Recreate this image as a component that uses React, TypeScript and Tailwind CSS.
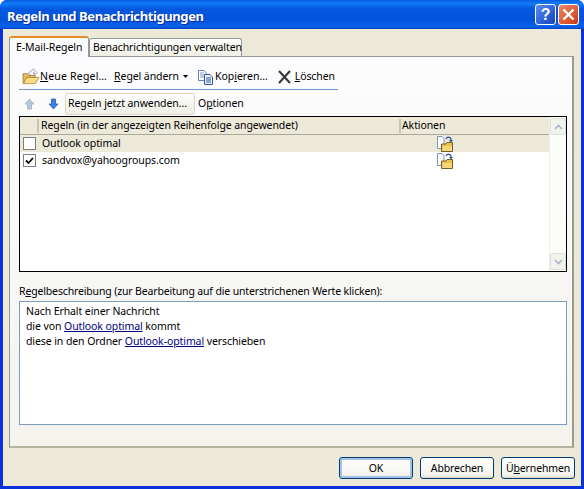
import React from "react";

const OpenFolder = () => (
  <svg width="18" height="17" viewBox="0 0 19 18">
    <path d="M7 5 L12 1 L16 5 L11 10 Z" fill="#f4f6fb" stroke="#7f8fb0" strokeWidth="0.8" />
    <path d="M12 4 L14 6 L12 7 Z" fill="#d0605a" />
    <path d="M1 6 H6 L7 8 H14 V10 H5 L2 16 H1 Z" fill="#e8bd5c" stroke="#9a7a2c" strokeWidth="0.8" />
    <path d="M5 10 H18 L14 16.5 H1.5 Z" fill="#fbdc85" stroke="#a8842e" strokeWidth="0.8" />
  </svg>
);

const CopyIcon = () => (
  <svg width="17" height="16" viewBox="0 0 17 16">
    <path d="M1.5 1.5 H7 L9 3.5 V11.5 H1.5 Z" fill="#fff" stroke="#5f7fb8" />
    <path d="M3 4 H7 M3 6 H7 M3 8 H7" stroke="#7e9ccc" />
    <path d="M7.5 5.5 H13 L15.5 8 V15.5 H7.5 Z" fill="#eef3fb" stroke="#2f55a0" />
    <path d="M9 9 H14 M9 11 H14 M9 13 H14" stroke="#2f55a0" />
  </svg>
);

const DeleteIcon = () => (
  <svg width="15" height="14" viewBox="0 0 15 14">
    <path d="M2 1 L13 13 M13 1 L2 13" stroke="#33353a" strokeWidth="2" />
  </svg>
);

const ArrowUp = () => (
  <svg width="11" height="12" viewBox="0 0 11 12">
    <path d="M5.5 1 L10 6 H7.5 V11 H3.5 V6 H1 Z" fill="#b4c6d8" stroke="#9db2c6" strokeWidth="0.8" />
  </svg>
);

const ArrowDown = () => (
  <svg width="11" height="12" viewBox="0 0 11 12">
    <path d="M5.5 11 L10 6 H7.5 V1 H3.5 V6 H1 Z" fill="#3f7de0" stroke="#2a5bb8" strokeWidth="0.8" />
  </svg>
);

const MoveIcon = () => (
  <svg width="16" height="16" viewBox="0 0 16 16">
    <path d="M0.5 0.5 H5 L7 2.5 V12.5 H0.5 Z" fill="#fff" stroke="#7f93bd" />
    <path d="M9 3 C10 0.5 13 0.5 14 3 V5" fill="none" stroke="#2c4f9c" strokeWidth="1.2" />
    <path d="M12 4 H16 L14 6.5 Z" fill="#2c4f9c" />
    <path d="M4.5 8 H9 L10 6.5 H15.5 V15.5 H4.5 Z" fill="#eac04f" stroke="#77602a" />
    <path d="M5.5 10 H15 V15 H5.5 Z" fill="#f6d778" />
  </svg>
);

const Chevron = ({ down }: { down?: boolean }) => (
  <svg width="9" height="6" viewBox="0 0 9 6">
    <path d={down ? "M1 1 L4.5 4.5 L8 1" : "M1 5 L4.5 1.5 L8 5"} fill="none" stroke="#a9b4c4" strokeWidth="1.6" />
  </svg>
);

const Btn = ({ children, primary }: { children: React.ReactNode; primary?: boolean }) => (
  <button
    className={
      "w-[74px] h-[22px] rounded-[3px] border border-[#003c74] bg-[linear-gradient(#ffffff,#f4f3ee_85%,#dcd8c8)] text-black leading-none whitespace-nowrap tracking-[-0.15px] " +
      (primary ? "shadow-[inset_0_0_0_2px_#a9c1ea]" : "")
    }
  >
    {children}
  </button>
);

export default function App() {
  return (
    <div className="w-[584px] h-[489px] flex flex-col rounded-t-[7px] overflow-hidden bg-[#0831d9] text-[10.5px] tracking-[-0.09px] whitespace-nowrap text-black font-['Noto_Sans','DejaVu_Sans',sans-serif]">
      <div className="h-[29px] shrink-0 flex items-center pl-[7px] pr-[5px] bg-[linear-gradient(#0a5ae0,#0f7cf6_12%,#0458e0_30%,#0353dc_70%,#0a63ee_90%,#0447c8)]">
        <span className="flex-1 pt-[4px] text-white font-bold text-[13px] tracking-[-0.4px] [text-shadow:1px_1px_0_#0a2a9a]">
          Regeln und Benachrichtigungen
        </span>
        <div className="flex gap-[2px]">
          <div className="w-[21px] h-[21px] rounded-[3px] border border-white bg-[linear-gradient(135deg,#5d8cf0,#2a5fd6_60%,#1d46b8)] flex items-center justify-center text-white font-bold text-[16px] font-['Liberation_Sans',sans-serif]">
            ?
          </div>
          <div className="w-[21px] h-[21px] rounded-[3px] border border-white bg-[linear-gradient(135deg,#e88a6a,#dc5a34_60%,#c03a18)] flex items-center justify-center">
            <svg width="13" height="13" viewBox="0 0 13 13">
              <path d="M1.5 1.5 L11.5 11.5 M11.5 1.5 L1.5 11.5" stroke="#fff" strokeWidth="2.4" />
            </svg>
          </div>
        </div>
      </div>

      <div className="flex-1 mx-[3px] mb-[3px] bg-[#ece9d8] flex flex-col pl-[6px] pr-[7px] pt-[7px] min-h-0">
        <div className="flex items-end h-[20px] shrink-0 relative z-10">
          <div className="w-[80px] h-[21px] -mb-px bg-[#fcfcfe] border-x border-[#919b9c] rounded-t-[3px] border-t-[2px] border-t-[#e68b2c] flex items-center pl-[6px]">
            E-Mail-Regeln
          </div>
          <div className="w-[153px] h-[18px] bg-[linear-gradient(#ffffff,#f0efe6)] border border-[#919b9c] border-b-0 rounded-t-[3px] flex items-center pl-[3px]">
            Benachrichtigungen verwalten
          </div>
        </div>

        <div className="h-[392px] shrink-0 border border-[#919b9c] border-r-[2px] border-b-[2px] border-r-[#9c9a8e] border-b-[#b5b2a0] bg-[linear-gradient(#fcfcfe,#f4f3ee)] pl-[9px] pr-[5px] flex flex-col">
          <div className="w-[319px] h-[33px] shrink-0 border-b border-[#6f93cf] flex items-center pt-[7px] pl-[3px]">
            <OpenFolder />
            <span className="tracking-[0.2px]"><u>N</u>eue Regel…</span>
            <span className="ml-[7px]"><u>R</u>egel ändern</span>
            <svg className="ml-[4px]" width="5" height="3" viewBox="0 0 5 3"><path d="M0 0 H5 L2.5 3 Z" fill="#000" /></svg>
            <span className="ml-[9px] flex"><CopyIcon /></span>
            <span className="ml-px tracking-[0px]">Kop<u>i</u>eren…</span>
            <span className="ml-[9px] flex"><DeleteIcon /></span>
            <span className="ml-[3px]"><u>L</u>öschen</span>
          </div>

          <div className="h-[26px] shrink-0 flex items-center pt-[2px]">
            <span className="ml-[5px] flex"><ArrowUp /></span>
            <span className="ml-[13px] flex"><ArrowDown /></span>
            <div className="ml-[6px] w-[130px] h-[22px] rounded-[3px] border border-[#d8d5c6] bg-[linear-gradient(#fdfdfb,#efeee6)] flex items-center pl-[2px] whitespace-pre">
              Regeln <u>j</u>etzt anwenden…
            </div>
            <span className="ml-[3px]">O<u>p</u>tionen</span>
          </div>

          <div className="h-[156px] shrink-0 border border-black bg-white flex">
            <div className="flex-1 flex flex-col">
              <div className="h-[18px] flex bg-[#ece9d8] border-b border-[#aca899] items-center">
                <div className="w-[19px] h-[14px] border-r-2 border-[#c7c5b2]" />
                <div className="w-[362px] h-[14px] flex items-center pl-[2px] border-r-2 border-[#c7c5b2]">
                  Regeln (in der angezeigten Reihenfolge angewendet)
                </div>
                <div className="pl-[1px]">Aktionen</div>
              </div>
              <div className="h-[17px] flex items-center bg-[#ece9d8]">
                <div className="ml-[3px] w-[13px] h-[13px] border border-[#7f7f7f] bg-white" />
                <span className="ml-[6px] flex-1">Outlook optimal</span>
                <span className="mr-[96px] flex"><MoveIcon /></span>
              </div>
              <div className="h-[17px] flex items-center">
                <div className="ml-[3px] w-[13px] h-[13px] border border-[#7f7f7f] bg-white flex items-center justify-center">
                  <svg width="9" height="8" viewBox="0 0 9 8">
                    <path d="M1 3.5 L3.5 6 L8 1" fill="none" stroke="#000" strokeWidth="1.8" />
                  </svg>
                </div>
                <span className="ml-[6px] flex-1">sandvox@yahoogroups.com</span>
                <span className="mr-[96px] flex"><MoveIcon /></span>
              </div>
            </div>
            <div className="w-[17px] flex flex-col justify-between bg-[#fcfcf8] border-l border-[#eeeeea]">
              <div className="h-[17px] mt-px rounded-[2px] border border-[#dfe0dc] bg-[#f3f3ee] flex items-center justify-center"><Chevron /></div>
              <div className="h-[17px] mb-px rounded-[2px] border border-[#dfe0dc] bg-[#f3f3ee] flex items-center justify-center"><Chevron down /></div>
            </div>
          </div>

          <div className="mt-[11px] h-[17px] shrink-0 flex items-center whitespace-pre tracking-[-0.15px]">
            R<u>e</u>gelbeschreibung (zur Bearbeitung auf die unterstrichenen Werte klicken):
          </div>

          <div className="mt-px h-[124px] shrink-0 border border-[#7f9db9] bg-white pl-[6px] pt-px leading-[15px]">
            <div className="pt-px">Nach Erhalt einer Nachricht</div>
            <div>die von <span className="text-[#000080] underline">Outlook optimal</span> kommt</div>
            <div>diese in den Ordner <span className="text-[#000080] underline">Outlook-optimal</span> verschieben</div>
          </div>
        </div>

        <div className="flex justify-end gap-[7px] pt-[9px] -mr-[1px]">
          <Btn primary>OK</Btn>
          <Btn>Abbrechen</Btn>
          <Btn>Ü<u>b</u>ernehmen</Btn>
        </div>
      </div>
    </div>
  );
}
